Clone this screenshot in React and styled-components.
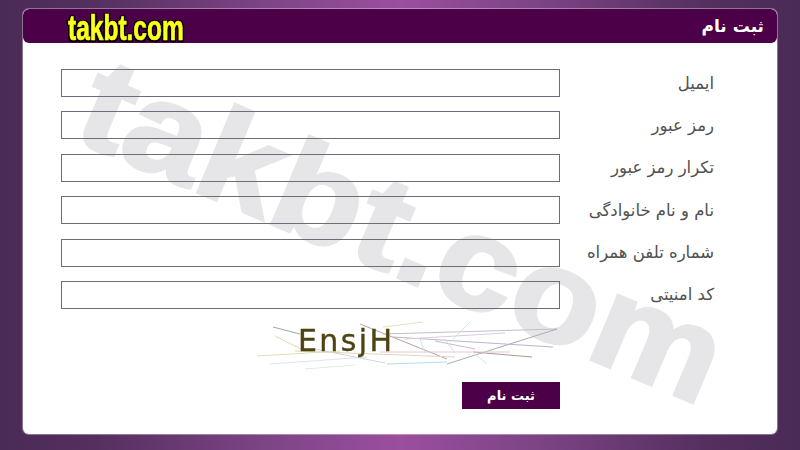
import React from 'react'
import styled, { createGlobalStyle } from 'styled-components'

const GlobalStyle = createGlobalStyle`
  html, body {
    margin: 0;
    padding: 0;
    height: 100%;
  }
  body {
    overflow: hidden;
  }
`

const Page = styled.div`
  box-sizing: border-box;
  width: 800px;
  height: 450px;
  padding: 9px 23px 16px;
  background: linear-gradient(90deg, #4a2a56 0%, #55305f 12%, #7b4384 32%, #9a4f9f 50%, #7b4384 68%, #55305f 88%, #4a2a56 100%);
  font-family: "DejaVu Sans", "Noto Sans", sans-serif;
`

const Card = styled.div`
  position: relative;
  height: 425px;
  background: #fff;
  border-radius: 6px;
  overflow: hidden;
  box-shadow: 0 0 0 1px rgba(255, 255, 255, 0.35);
`

const Header = styled.div`
  position: relative;
  z-index: 2;
  display: flex;
  align-items: center;
  height: 34px;
  padding: 0 13px;
  direction: rtl;
  background: #4b0048;
  border-radius: 6px;
  color: #fff;
  font-size: 17px;
  font-weight: bold;
`

const Logo = styled.div`
  position: absolute;
  left: 45px;
  top: 0;
  font-family: "Liberation Sans", Arial, sans-serif;
  font-size: 35px;
  line-height: 38px;
  font-weight: bold;
  color: #ffff1e;
  direction: ltr;
  white-space: nowrap;
  transform: scaleX(0.7);
  transform-origin: left center;
  -webkit-text-stroke: 0.7px #ffff1e;
  text-shadow: 2px 0 0 #000, -2px 0 0 #000, 0 1.5px 0 #000, 0 -1.5px 0 #000, 2px 1.5px 0 #000, -2px 1.5px 0 #000, 2px -1.5px 0 #000, -2px -1.5px 0 #000;
`

const Watermark = styled.div`
  position: absolute;
  left: 90px;
  top: 27px;
  z-index: 0;
  font-family: "Liberation Sans", Arial, sans-serif;
  font-size: 132px;
  line-height: 132px;
  font-weight: bold;
  color: #e6e6e8;
  white-space: nowrap;
  -webkit-text-stroke: 3px #e6e6e8;
  transform: rotate(23deg) scaleX(1.1);
  transform-origin: left top;
`

const Form = styled.form`
  position: relative;
  z-index: 1;
  display: flex;
  flex-direction: column;
  padding: 26px 63px 0 38px;
  direction: rtl;
`

const Row = styled.label`
  display: flex;
  align-items: center;
  justify-content: space-between;
  height: 28px;
  margin-bottom: 14.4px;
`

const LabelText = styled.span`
  color: #505050;
  font-size: 16.5px;
  white-space: nowrap;
`

const Field = styled.input`
  box-sizing: border-box;
  width: 499px;
  height: 28px;
  margin: 0;
  padding: 0 6px;
  background: transparent;
  border: 1px solid #6f6c7a;
  outline: none;
`

const CaptchaWrap = styled.div`
  display: flex;
  justify-content: flex-end;
  height: 48px;
  margin: -2px 0 0;
  padding-right: 154px;
  direction: ltr;
`

const CaptchaImage = styled.svg`
  flex: none;
  width: 305px;
  height: 48px;
  overflow: visible;
  filter: blur(0.4px);
`

const ButtonRow = styled.div`
  display: flex;
  justify-content: flex-end;
  margin-top: 12.6px;
  direction: ltr;
`

const Submit = styled.button`
  width: 98px;
  height: 27px;
  margin-right: 154px;
  padding: 0;
  border: 0;
  background: #4b0048;
  color: #fff;
  font-family: "DejaVu Sans", "Noto Sans", sans-serif;
  font-size: 13px;
  font-weight: bold;
  direction: rtl;
`

const fields = [
  { label: 'ایمیل', type: 'text' },
  { label: 'رمز عبور', type: 'password' },
  { label: 'تکرار رمز عبور', type: 'password' },
  { label: 'نام و نام خانوادگی', type: 'text' },
  { label: 'شماره تلفن همراه', type: 'text' },
  { label: 'کد امنیتی', type: 'text' }
]

const noise = [
  ['M18 6 L45 13', '#a8a2a4'], ['M2 35 L85 30', '#d8e2b4'], ['M105 3 L192 38', '#b0a0a6'],
  ['M128 13 L302 8', '#c4bcd0'], ['M138 16 L298 26', '#bcb4cc'], ['M192 43 L302 8', '#a4aeb0'],
  ['M132 43 L192 41', '#b0e0e0'], ['M218 31 L277 36', '#a09e96'], ['M125 31 L255 31', '#eec4d6'],
  ['M15 43 L112 36', '#d8e8e0'], ['M215 1 L198 18', '#e0e6d4'], ['M218 31 L232 43', '#cce6de'],
  ['M128 6 L168 1', '#e2e2c4'], ['M20 15 L50 30', '#ded8b8'], ['M60 28 L130 42', '#d2d2ec'],
  ['M150 18 L250 12', '#d8ccdc'], ['M180 20 L220 28', '#c8b8d2'], ['M40 30 L200 36', '#dcd6b8'],
  ['M50 48 L100 44', '#e0ece0'], ['M165 18 L170 32', '#d2e0e6'], ['M190 18 L200 32', '#d2e0e6']
]

function Captcha () {
  return (
    <CaptchaImage viewBox="0 0 305 48">
      {noise.map(([d, color]) => (
        <path key={d} d={d} stroke={color} strokeWidth="1" fill="none" />
      ))}
      <text x="43" y="30" fontFamily="DejaVu Sans, sans-serif" fontSize="30" fill="#4d4413" stroke="#4d4413" strokeWidth="0.4" letterSpacing="2.4">EnsjH</text>
    </CaptchaImage>
  )
}

export default function App () {
  return (
    <Page>
      <GlobalStyle />
      <Card>
        <Watermark>takbt.com</Watermark>
        <Header>
          ثبت نام
          <Logo>takbt.com</Logo>
        </Header>
        <Form onSubmit={e => e.preventDefault()}>
          {fields.map(field => (
            <Row key={field.label}>
              <LabelText>{field.label}</LabelText>
              <Field type={field.type} />
            </Row>
          ))}
          <CaptchaWrap>
            <Captcha />
          </CaptchaWrap>
          <ButtonRow>
            <Submit type="submit">ثبت نام</Submit>
          </ButtonRow>
        </Form>
      </Card>
    </Page>
  )
}
